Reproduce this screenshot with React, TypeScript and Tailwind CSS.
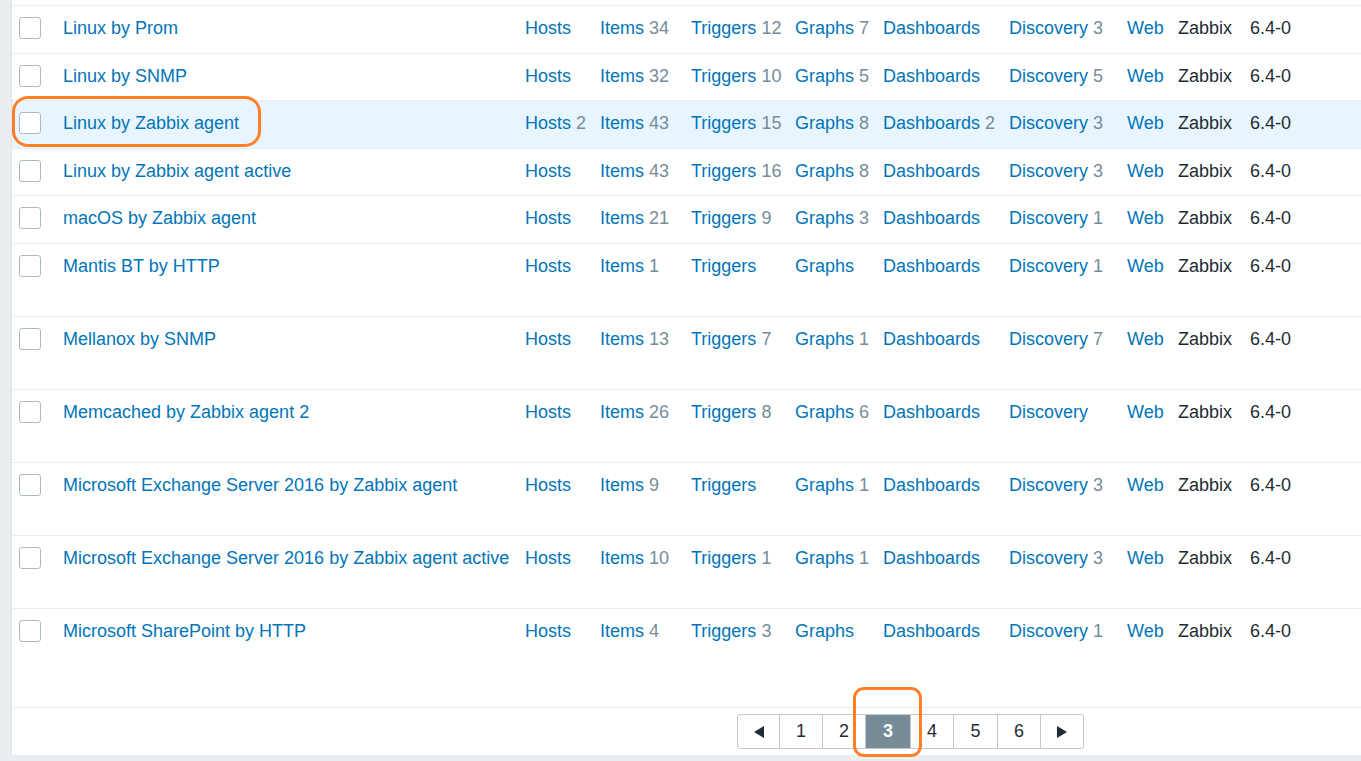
import React from "react";

type Row = {
  name: string;
  hosts?: number;
  items?: number;
  triggers?: number;
  graphs?: number;
  dashboards?: number;
  discovery?: number;
  h: string;
  last?: boolean;
  selected?: boolean;
};

const rows: Row[] = [
  { name: "Linux by Prom", items: 34, triggers: 12, graphs: 7, discovery: 3, h: "h-[48px]" },
  { name: "Linux by SNMP", items: 32, triggers: 10, graphs: 5, discovery: 5, h: "h-[47px]" },
  { name: "Linux by Zabbix agent", hosts: 2, items: 43, triggers: 15, graphs: 8, dashboards: 2, discovery: 3, selected: true, h: "h-[48px]" },
  { name: "Linux by Zabbix agent active", items: 43, triggers: 16, graphs: 8, discovery: 3, h: "h-[47px]" },
  { name: "macOS by Zabbix agent", items: 21, triggers: 9, graphs: 3, discovery: 1, h: "h-[48px]" },
  { name: "Mantis BT by HTTP", items: 1, discovery: 1, h: "h-[73px]" },
  { name: "Mellanox by SNMP", items: 13, triggers: 7, graphs: 1, discovery: 7, h: "h-[73px]" },
  { name: "Memcached by Zabbix agent 2", items: 26, triggers: 8, graphs: 6, h: "h-[73px]" },
  { name: "Microsoft Exchange Server 2016 by Zabbix agent", items: 9, graphs: 1, discovery: 3, h: "h-[73px]" },
  { name: "Microsoft Exchange Server 2016 by Zabbix agent active", items: 10, triggers: 1, graphs: 1, discovery: 3, h: "h-[73px]" },
  { name: "Microsoft SharePoint by HTTP", items: 4, triggers: 3, discovery: 1, h: "h-[98px]", last: true },
];

const LinkCount = ({ label, count, w }: { label: string; count?: number; w: string }) => (
  <div className={`${w} shrink-0 whitespace-nowrap`}>
    <span className="text-[#0275b8]">{label}</span>
    {count !== undefined && <span className="text-[#768d99]"> {count}</span>}
  </div>
);

const TemplateRow = ({ row }: { row: Row }) => (
  <div
    className={`flex items-start ${row.h} ${row.last ? "" : "border-b border-[#ebeef0]"} ${
      row.selected ? "bg-[#e8f5ff]" : "bg-white"
    }`}
  >
    <div className="w-[51px] shrink-0 pl-[7px] pt-[11px]">
      <div className="w-[22px] h-[22px] rounded-[3px] border border-[#acbbc2] bg-white" />
    </div>
    <div className="flex items-start pt-[11px] leading-[22px]">
      <div className="w-[462px] shrink-0 whitespace-nowrap text-[#0275b8]">{row.name}</div>
      <LinkCount label="Hosts" count={row.hosts} w="w-[75px]" />
      <LinkCount label="Items" count={row.items} w="w-[91px]" />
      <LinkCount label="Triggers" count={row.triggers} w="w-[104px]" />
      <LinkCount label="Graphs" count={row.graphs} w="w-[88px]" />
      <LinkCount label="Dashboards" count={row.dashboards} w="w-[126px]" />
      <LinkCount label="Discovery" count={row.discovery} w="w-[118px]" />
      <LinkCount label="Web" w="w-[51px]" />
      <div className="w-[72px] shrink-0 text-[#1f2c33]">Zabbix</div>
      <div className="shrink-0 text-[#1f2c33]">6.4-0</div>
    </div>
  </div>
);

const Arrow = ({ dir }: { dir: "left" | "right" }) => (
  <svg width="10" height="12" viewBox="0 0 10 12">
    {dir === "left" ? <polygon points="10,0 10,12 0,6" fill="#1f2c33" /> : <polygon points="0,0 0,12 10,6" fill="#1f2c33" />}
  </svg>
);

const pageWidths: Record<number, string> = {
  1: "w-[43px]",
  2: "w-[43px]",
  3: "w-[45px]",
  4: "w-[43px]",
  5: "w-[44px]",
  6: "w-[43px]",
};

const Pager = () => (
  <div className="inline-flex h-[35px] border border-[#bfc9ce] rounded-[3px] bg-white">
    <div className="w-[42px] flex items-center justify-center border-r border-[#bfc9ce]">
      <Arrow dir="left" />
    </div>
    {[1, 2, 3, 4, 5, 6].map((p) => (
      <div
        key={p}
        className={`${pageWidths[p]} flex items-center justify-center border-r border-[#bfc9ce] ${
          p === 3 ? "bg-[#768d99] text-white font-bold" : "text-[#1f2c33]"
        }`}
      >
        {p}
      </div>
    ))}
    <div className="w-[42px] flex items-center justify-center">
      <Arrow dir="right" />
    </div>
  </div>
);

export default function App() {
  return (
    <div
      className="w-[1361px] h-[761px] overflow-hidden bg-[#ebeef0] text-[18px] flex"
      style={{ fontFamily: '"Liberation Sans", Arial, sans-serif' }}
    >
      <div className="ml-[11px] w-[1350px] h-[755px] bg-white border-l border-[#dfe4e7] relative">
        <div className="h-[6px] border-b border-[#ebeef0]" />
        {rows.map((r) => (
          <TemplateRow key={r.name} row={r} />
        ))}
        <div className="border-t border-[#ebeef0] h-[48px] pt-[6px] pl-[725px]">
          <Pager />
        </div>

        {/* orange annotation marks */}
        <div className="absolute left-[0px] top-[96px] w-[249px] h-[51px] border-[3.5px] border-[#ff7f27] rounded-[16px] pointer-events-none" />
        <div className="absolute left-[841px] top-[687px] w-[69px] h-[70px] border-[3.5px] border-[#ff7f27] rounded-[11px] pointer-events-none" />
      </div>
    </div>
  );
}
